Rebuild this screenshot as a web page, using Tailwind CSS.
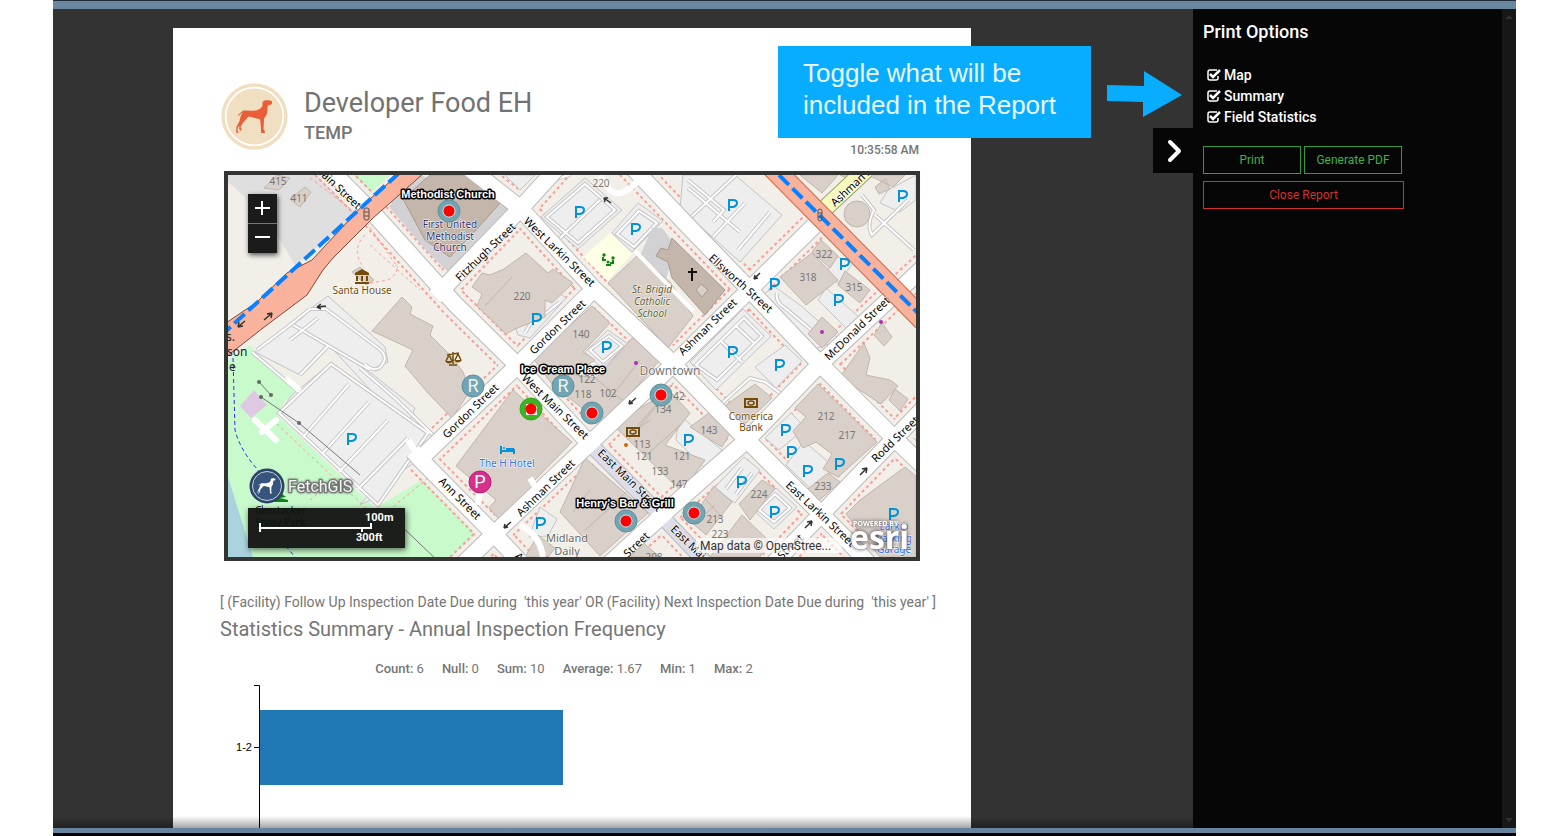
<!DOCTYPE html>
<html lang="en">
<head>
<meta charset="utf-8">
<meta name="viewport" content="width=device-width, initial-scale=1">
<title>Developer Food EH - Report</title>
<script src="https://cdn.jsdelivr.net/npm/@tailwindcss/browser@4"></script>
</head>
<body class="bg-white font-['Roboto',sans-serif]">
<div class="flex h-screen min-h-0 flex-col overflow-hidden pl-[53px] pr-7">
  <div class="h-[9px] shrink-0 border-t border-[#222d3b] bg-[#6a87a1]"></div>
  <div class="relative flex min-h-0 flex-1 bg-[#333]">
    <main class="relative min-w-0 flex-1 overflow-hidden pl-[120px] pr-[222px] pt-[19px]">
      <article class="bg-white px-[47px] pt-[55px] text-[#757575]">
        <header class="flex items-start">
          <svg class="ml-px size-[67px] shrink-0" viewBox="62 249 202 202" role="img" aria-label="Dog logo">
            <circle cx="163" cy="350" r="100" fill="#f0dfc1"/>
            <circle cx="163" cy="350" r="87" fill="none" stroke="#fff" stroke-width="5"/>
            <path fill="#e95d38" d="M187 308Q190 300 201 301Q209 300 216 305L215 313L203 317Q202 326 201 340Q198 349 192 355L190 388L195 396L193 400H183L182 380L180 358Q165 357 158 352L145 350L137 359L127 370L121 382L124 390L120 394L117 388L117 377L112 384L112 394L116 399H108L108 382L117 366L121 350L127 337L116 347L112 346L129 332L160 333Q180 330 187 318Z"/>
          </svg>
          <div class="ml-4 flex-1 pt-0.5">
            <h1 class="text-[27px] leading-9 text-[#727272]">Developer Food EH</h1>
            <p class="text-lg font-medium leading-6">TEMP</p>
          </div>
          <time class="mr-[5px] pt-[58px] text-xs font-medium leading-[18px]">10:35:58 AM</time>
        </header>
        <section class="relative mx-1 mt-3 border-4 border-[#333533]" aria-label="Map">
          <svg class="block w-full" viewBox="228 175 688 382" font-family="'Noto Sans',sans-serif">
            <defs>
              <g id="streets" fill="none">
                <path d="M325 165L373 213L455 304L517 365L588 442"/>
                <path d="M465 165L520 208L593 288L667 358L747 440L847 540L870 565"/>
                <path d="M630 165L690 228L747 287L820 364L893 437L925 468"/>
                <path d="M435 297L520 209L560 165"/>
                <path d="M420 459L517 366L593 290"/>
                <path d="M460 567L493 535L587 446L680 358L822 218"/>
                <path d="M925 266L820 364L747 440L680 499L608 565"/>
                <path d="M925 407L772 565"/>
                <path d="M413 451L420 459L495 535L525 567"/>
              </g>
              <path id="mall" fill="none" d="M588 442L650 504L710 567"/>
              <g id="aisles" fill="none">
                <path d="M331 364L428 433L378 505L279 413ZM349 384L303 437M369 402L322 454M388 420L339 472M408 438L358 489M252 352L285 380L299 392M310 309L290 325L257 350M293 325L370 370M310 309L326 309L378 348Q389 356 382 365T365 364M290 340L318 318M300 375L328 346M360 368L397 400L435 437"/>
                <path d="M585 184L615 210L578 243L547 217ZM560 238L600 200M639 211L657 223L634 247L617 234ZM688 180L724 210L713 222M736 175L688 220M745 203L713 237M770 212L738 250M688 188L740 232M530 200Q545 180 570 175"/>
                <path d="M540 318L560 302M525 333L532 321M609 336L622 346L603 362L590 350ZM744 318L762 336L717 380L696 365ZM735 325L755 344M720 340L742 362M742 468L726 489M752 473L736 494M775 494L790 508L774 522L759 510ZM777 293Q775 302 785 308L815 333M862 195L874 210Q866 225 872 235L908 200M875 215L914 250"/>
                <path d="M720 405L750 378L765 382L784 396"/>
              </g>
              <path id="parking" fill="none" stroke="#0092da" stroke-width="2" d="M-4 6V-5H0Q4 -5 4 -2T0 2H-4"/>
            </defs>
            <rect x="228" y="175" width="688" height="382" fill="#f2efe9"/>
            <path fill="#dfdfe0" d="M228 175H335L368 207L295 265L264 214L228 182Z"/>
            <path fill="#c8facc" d="M353 175H390L367 197ZM228 360L250 345L262 362L292 386L300 392L286 400L277 415L375 508L427 477L487 533L457 557H228Z"/>
            <path fill="#aad3df" d="M228 477L253 557H228Z"/>
            <g fill="none" stroke="#fa9c98" stroke-dasharray="3 3"><use href="#streets" stroke-width="30"/><use href="#mall" stroke-width="28"/></g>
            <g fill="none" stroke="#f2efe9"><use href="#streets" stroke-width="26"/><use href="#mall" stroke-width="24"/></g>
            <!-- car parks -->
            <g fill="#eee" stroke="#c4c4c8">
              <path d="M302 318L310 309L328 296L385 347L388 362L372 369L352 358L415 408L405 432L375 395L329 345L300 375L255 352Z"/>
              <path d="M331 363L414 438L360 505L376 497L405 469L415 462L279 413L292 395Z"/>
              <path d="M331 364L428 433L378 505L279 413Z"/>
              <path d="M585 178L622 210L578 249L541 217Z"/><path d="M638 203L663 221L632 252L612 233Z"/>
              <path d="M505 175H535L520 190ZM683 175H735L782 215L740 262L680 208Z"/>
              <path d="M760 296L775 287L800 305L840 340L812 350L790 330Z"/>
              <path d="M555 290L566 298L530 338L518 335L515 325Z"/>
              <path d="M608 330L628 344L602 368L585 352Z"/>
              <path d="M743 309L771 336L716 390L690 362Z"/><path d="M785 345L802 361L776 388L755 367Z"/>
              <path d="M888 190L916 175V200L900 212L880 203Z"/>
              <path d="M679 415L722 450L705 468L676 440Z"/><path d="M744 457L760 470L735 503L714 488Z"/>
              <path d="M776 488L797 507L774 529L753 510Z"/><path d="M791 413L806 428L779 450L765 438Z"/>
              <path d="M804 441L835 468L813 491L786 465Z"/><path d="M540 507L557 519L548 536L529 537Z"/>
              <path d="M835 256L853 263L838 283L825 276ZM826 288L860 318L846 328L818 300Z"/>
            </g>
            <use href="#aisles" stroke="#c6c6c9" stroke-width="4"/>
            <use href="#aisles" stroke="#fff" stroke-width="2"/>
            <path fill="none" stroke="#fff" stroke-width="6" stroke-linecap="round" d="M255 420L276 440M262 432L276 420M288 380L298 389"/>
            <path fill="#ffffe5" d="M610 233L632 254L608 281L583 257Z"/>
            <path fill="#dfc9e2" d="M240 406L254 390L267 405L251 418Z"/>
            <path fill="#d2d2d4" d="M389 207L398 192L420 175L518 206L500 225L448 272L425 249ZM652 228L662 228L675 245L665 284L640 256Z"/>
            <!-- buildings -->
            <g fill="#d9d0c9" stroke="#c2b5aa">
              <path d="M402 297L412 307L410 314L433 326L430 335L452 357L463 372L470 391L452 418L427 392L405 366L413 350L372 331Z"/>
              <path d="M472 287L482 273L490 275L504 269L526 253L548 273L553 269L573 283L552 303L545 300L545 317L515 329L506 334L477 306L482 294Z"/>
              <path d="M513 390L572 442L533 482L540 494L500 520L489 508L496 500L456 466Z"/>
              <path d="M533 358L592 306L610 323L583 352L595 360L554 387Z"/>
              <path d="M635 335L660 360L603 425L557 388L570 374L596 378Z"/>
              <path d="M638 255L670 282L693 316L668 348L608 283Z"/>
              <path d="M654 400L664 385L690 413L665 445L705 460L682 492L612 424Z"/>
              <path d="M585 458L648 513L600 556L560 512Z"/>
              <path d="M713 410L733 428L722 447L690 427Z"/><path d="M755 384L772 398L744 425L715 413Z"/>
              <path d="M818 384L877 442L838 477L823 469L832 454L816 442L803 448L793 431L806 417L795 408Z"/>
              <path d="M714 486L732 502L706 535L690 521ZM762 480L775 488L750 520L739 504ZM742 515L768 540L760 557H710Z"/>
              <path d="M828 473L840 482L816 503L804 492ZM905 467L916 476V557H880L846 514L860 500Z"/>
              <path d="M812 253L838 280L806 305L780 277ZM821 240L838 256L830 268L812 252ZM845 271L870 290L860 303L838 285Z"/>
              <path d="M822 317L838 332L822 348L808 334ZM840 377L864 343L870 358L866 375L890 380L898 386L881 404Z"/><circle cx="857" cy="214" r="13"/>
              <path d="M895 389L908 399L900 411L889 400ZM875 187L885 179L890 189L879 194ZM868 175H905L893 187ZM800 175H838L822 193ZM882 323L892 337L884 346L874 335ZM855 175H840L850 180Z"/>
              <path d="M264 188L277 175L290 178L279 190ZM290 199L305 187L311 192L300 207ZM352 272L360 267L374 280L366 285Z"/>
              <path d="M538 535L555 548L548 557H525ZM640 540L660 557H630Z"/>
            </g>
            <path fill="none" stroke="#c2b5aa" d="M485 306L512 277M609 400L640 360M595 378L622 400M638 425L665 395M628 440L655 408M650 452L680 425M605 512L628 490M585 530L610 508M573 512L590 490M700 519L715 505M706 500L720 515M640 427L650 420"/>
            <g fill="#c4b6ab" stroke="#a89a8f"><path d="M403 199L430 175H478L501 202L477 229L450 257L425 240Z"/><path d="M656 256L661 248L668 250L672 238L725 290L705 315L672 278L668 262Z"/><path fill="#d9d0c9" d="M701 284L708 290L702 297L696 290Z"/></g>
            <path fill="none" stroke="#fff" stroke-width="4" stroke-linecap="round" d="M636 252L692 310"/>
            <path fill="none" stroke="#fa9c98" stroke-dasharray="3 3" d="M365 235Q350 250 364 268M370 283L388 280Q400 272 396 265M310 178L365 220L398 268M277 424L370 512M428 478L382 516M370 245L420 290M310 500L335 480M785 175L910 300"/>
            <!-- road casings, then surfaces -->
            <use href="#streets" stroke="#bcbabd" stroke-width="18"/>
            <use href="#mall" stroke="#bcbabd" stroke-width="16"/>
            <use href="#mall" stroke="#dddde9" stroke-width="14"/>
            <use href="#streets" stroke="#fff" stroke-width="16"/>
            <path fill="none" stroke="#fff" stroke-width="6" d="M640 178Q622 200 610 190L600 175M530 478L540 495M418 455L408 440M480 490L478 505M520 525Q540 535 543 557"/>
            <path fill="none" stroke="#9aa36a" stroke-width="18" d="M820 213L866 170"/>
            <path fill="none" stroke="#f7fabf" stroke-width="16" d="M820 213L866 170"/>
            <path fill="#f9b29c" stroke="#7c4a3d" d="M400 173L363 205L312 260L287 273L257 302L226 323V357L263 328L307 295L323 270L333 258L373 218L424 173Z"/>
            <path fill="none" stroke="#c8684d" stroke-width="22" d="M770 165L925 322"/>
            <path fill="none" stroke="#f9b29c" stroke-width="20" d="M770 165L925 322"/>
            <path fill="none" stroke="#0a80ff" stroke-width="4" stroke-dasharray="14 5" d="M399 173L226 331M779 175L925 320"/>
            <path fill="none" stroke="#2a2aff" stroke-dasharray="4 3" d="M233 358L235 430Q240 450 258 470L264 520L300 563"/>
            <path fill="none" stroke="#777" d="M259 382L271 395M261 397L299 423M299 423L360 475M395 520L440 563"/>
            <g fill="#666"><circle cx="259" cy="382" r="2"/><circle cx="271" cy="395" r="2"/><circle cx="261" cy="397" r="2"/><circle cx="299" cy="423" r="2"/></g>
            <g fill="#b02bb8"><circle cx="636" cy="363" r="2"/><circle cx="822" cy="332" r="2"/><circle cx="881" cy="322" r="2"/></g><circle cx="626" cy="445" r="2" fill="#d36800"/>
            <g fill="none" stroke="#333">
              <path d="M264 320L272 313M272 313L267 314M272 313L271 318M245 321L238 327M238 327L239 322M238 327L243 326M326 306L317 307M317 307L321 304M317 307L321 309M760 273L754 279M754 279L755 275M754 279L758 278M611 203L604 198M604 198L608 198M604 198L605 202M636 398L629 404M629 404L630 400M629 404L633 403M511 522L504 528M504 528L505 524M504 528L508 527M860 475L867 468M867 468L862 469M867 468L866 473M805 528L812 521M812 521L807 522M812 521L811 526" stroke-width="1.5"/>
              <rect x="364" y="208" width="5" height="12" rx="2" stroke="#555"/><rect x="818" y="209" width="4" height="12" rx="2" stroke="#555"/><path d="M364 212H369M364 216H369M818 213H822M818 217H822" stroke="#555"/>
            </g>
            <g>
              <use href="#parking" x="580" y="212"/><use href="#parking" x="636" y="229"/><use href="#parking" x="733" y="205"/><use href="#parking" x="903" y="196"/><use href="#parking" x="845" y="264"/><use href="#parking" x="775" y="284"/><use href="#parking" x="839" y="300"/><use href="#parking" x="537" y="319"/><use href="#parking" x="607" y="347"/><use href="#parking" x="733" y="352"/><use href="#parking" x="780" y="365"/><use href="#parking" x="352" y="439"/><use href="#parking" x="689" y="440"/><use href="#parking" x="786" y="430"/><use href="#parking" x="792" y="452"/><use href="#parking" x="808" y="471"/><use href="#parking" x="840" y="464"/><use href="#parking" x="742" y="482"/><use href="#parking" x="775" y="512"/><use href="#parking" x="541" y="523"/><use href="#parking" x="894" y="514"/>
            </g>
            <!-- place icons -->
            <path fill="#734a08" d="M362 269L369 273V275H355V273ZM356 276H358V281H356ZM361 276H363V281H361ZM366 276H368V281H366ZM355 282H369V284H355Z"/>
            <path fill="none" stroke="#734a08" stroke-width="1.5" d="M453 352V364M449 365H457M447 355L459 353M446 361L449 355L452 361M455 360L458 354L461 360"/><path fill="#734a08" d="M445 361H453Q449 366 445 361ZM454 360H462Q458 365 454 360Z"/>
            <g fill="none" stroke="#734a08" stroke-width="2"><rect x="627" y="428" width="12" height="8"/><rect x="745" y="399" width="12" height="8"/></g><g fill="none" stroke="#734a08" stroke-width="1.5"><ellipse cx="633" cy="432" rx="3" ry="2"/><ellipse cx="751" cy="403" rx="3" ry="2"/></g>
            <path stroke="#111" stroke-width="2" d="M692 268V281M688 272H697"/>
            <g fill="#0d8517"><circle cx="604" cy="255" r="1.7"/><circle cx="613" cy="258" r="1.7"/><circle cx="608" cy="262" r="1.5"/></g><path fill="none" stroke="#0d8517" stroke-width="2" d="M603 257V260H606M613 260V263H610M606 265H611"/>
            <path fill="none" stroke="#0092da" stroke-width="2" d="M501 446V454M501 451H514V454M514 449V451M506 449H514"/><circle cx="504" cy="448" r="1" fill="#0092da"/>
            <!-- street names -->
            <g font-size="11" fill="#000" stroke="#fff" stroke-width="1" paint-order="stroke" stroke-linejoin="round">
              <text transform="translate(357 210) rotate(43)" text-anchor="end">Main Street</text>
              <text transform="translate(460 282) rotate(-44)">Fitzhugh Street</text>
              <text transform="translate(523 222) rotate(44)">West Larkin Street</text>
              <text transform="translate(534 355) rotate(-44)">Gordon Street</text>
              <text transform="translate(708 259) rotate(42)">Ellsworth Street</text>
              <text transform="translate(683 356) rotate(-44)">Ashman Street</text>
              <text transform="translate(835 207) rotate(-43)">Ashman Street</text>
              <text transform="translate(829 361) rotate(-44)">McDonald Street</text>
              <text transform="translate(447 439) rotate(-44)">Gordon Street</text>
              <text transform="translate(438 482) rotate(45)">Ann Street</text>
              <text transform="translate(521 379) rotate(44)">West Main Street</text>
              <text transform="translate(521 517) rotate(-44)">Ashman Street</text>
              <text transform="translate(597 454) rotate(44)">East Main Street</text>
              <text transform="translate(670 530) rotate(44)">East Main Street</text>
              <text transform="translate(628 558) rotate(-44)">Street</text>
              <text transform="translate(785 486) rotate(43)">East Larkin Street</text>
              <text transform="translate(876 463) rotate(-44)">Rodd Street</text>
              <text transform="translate(782 560) rotate(-44)">Street</text>
              <text transform="translate(514 557) rotate(45)">Ann Street</text>
            </g>
            <g font-size="12" fill="#222"><text x="226" y="341">s.</text><text x="227" y="356">son</text><text x="229" y="371">e</text></g>
            <g font-size="10" text-anchor="middle" fill="#777">
              <text x="278" y="185">415</text><text x="299" y="202">411</text><text x="601" y="187">220</text><text x="522" y="300">220</text><text x="581" y="338">140</text><text x="824" y="258">322</text><text x="808" y="281">318</text><text x="854" y="291">315</text><text x="587" y="383">122</text><text x="583" y="398">118</text><text x="608" y="397">102</text><text x="679" y="400">42</text><text x="663" y="413">134</text><text x="642" y="448">113</text><text x="644" y="460">121</text><text x="682" y="460">121</text><text x="660" y="475">133</text><text x="679" y="488">147</text><text x="709" y="434">143</text><text x="826" y="420">212</text><text x="847" y="439">217</text><text x="823" y="490">233</text><text x="759" y="498">224</text><text x="715" y="523">213</text><text x="720" y="538">223</text><text x="654" y="561">208</text>
            </g>
            <g font-size="11" text-anchor="middle" fill="#777" stroke="#fff" stroke-width="1" paint-order="stroke">
              <text x="670" y="375" font-size="12">Downtown</text>
              <g fill="#666"><text x="567" y="542">Midland</text><text x="567" y="555">Daily</text></g>
              <g fill="#734a08" font-size="10"><text x="362" y="294">Santa House</text><text x="751" y="420">Comerica</text><text x="751" y="431">Bank</text></g>
              <g fill="#2f2d66" font-size="10"><text x="450" y="228">First United</text><text x="450" y="240">Methodist</text><text x="450" y="251">Church</text></g>
              <g fill="#5b5a2b" font-size="10" font-style="italic"><text x="652" y="293">St. Brigid</text><text x="652" y="305">Catholic</text><text x="652" y="317">School</text></g>
              <g fill="#2f74f0" font-size="10"><text x="507" y="467">The H Hotel</text><text x="894" y="530">Larkin</text><text x="894" y="542">Parking</text><text x="894" y="553">Garage</text></g>
            </g>
            <!-- facility markers -->
            <g fill="#72a5b1" stroke="#5e909c"><circle cx="449" cy="211" r="11"/><circle cx="473" cy="386" r="11"/><circle cx="563" cy="386" r="11"/><circle cx="592" cy="413" r="11"/><circle cx="661" cy="395" r="11"/><circle cx="626" cy="521" r="11"/><circle cx="694" cy="513" r="11"/><circle cx="531" cy="409" r="11" fill="#3cb320" stroke="#35a51a"/><circle cx="480" cy="482" r="11" fill="#d5308c" stroke="#ba1c72"/></g>
            <path fill="#fff" d="M526 404H534L537 407V415H526Z"/>
            <g fill="none" stroke="#e3f0f2"><circle cx="449" cy="211" r="6"/><circle cx="592" cy="413" r="6"/><circle cx="661" cy="395" r="6"/><circle cx="626" cy="521" r="6"/><circle cx="694" cy="513" r="6"/></g>
            <g fill="#fe0000"><circle cx="449" cy="211" r="5.5"/><circle cx="592" cy="413" r="5.5"/><circle cx="661" cy="395" r="5.5"/><circle cx="626" cy="521" r="5.5"/><circle cx="694" cy="513" r="5.5"/><circle cx="531" cy="409" r="5.5"/></g>
            <g font-family="Roboto,sans-serif" font-size="18" fill="#eaf3f5" text-anchor="middle"><text x="473" y="392">R</text><text x="563" y="392">R</text><text x="480" y="488" fill="#fff">P</text></g>
            <g font-family="'Liberation Sans',sans-serif" font-size="11" font-weight="700" fill="#fff" stroke="#000" stroke-width="3" stroke-linejoin="round" paint-order="stroke" text-anchor="middle"><text x="448" y="198">Methodist Church</text><text x="563" y="373">Ice Cream Place</text><text x="625" y="507">Henry's Bar &amp; Grill</text></g>
            <!-- brand badge and scale -->
            <path fill="#0d8517" d="M276 491L282 494L286 497L280 498L288 500V502H274V499Z"/>
            <circle cx="267" cy="486" r="16" fill="#35557c" stroke="#2b4467" stroke-width="3"/><circle cx="267" cy="486" r="14.5" fill="none" stroke="#c7d3df"/>
            <path fill="#fff" transform="translate(240 432) scale(.164 .154)" d="M187 308Q190 300 201 301Q209 300 216 305L215 313L203 317Q202 326 201 340Q198 349 192 355L190 388L195 396L193 400H183L182 380L180 358Q165 357 158 352L145 350L137 359L127 370L121 382L124 390L120 394L117 388L117 377L112 384L112 394L116 399H108L108 382L117 366L121 350L127 337L116 347L112 346L129 332L160 333Q180 330 187 318Z"/>
            <text class="drop-shadow-[0_0_1px_#444]" x="288" y="492" font-family="Roboto,sans-serif" font-size="16" fill="#f4f4f4" stroke="#777" stroke-width="2" paint-order="stroke">FetchGIS</text>
            <rect class="drop-shadow-[1px_2px_3px_#0009]" x="248" y="508" width="157" height="40" fill="#1b1e1b"/>
            <g font-size="10" fill="#0b150d"><text x="255" y="514">Gerstacker</text><text x="255" y="526">Spray Park</text></g>
            <path fill="none" stroke="#fff" stroke-width="2" d="M260 523V532M260 528H372M371 523V528M362 528V532"/>
            <g font-family="Roboto,sans-serif" font-size="11" font-weight="700" fill="#fff"><text x="365" y="521">100m</text><text x="356" y="541">300ft</text></g>
            <rect x="696" y="538" width="146" height="15" fill="#fff" fill-opacity=".65"/>
            <text x="700" y="550" font-family="Roboto,sans-serif" font-size="12" fill="#333">Map data © OpenStree...</text>
            <g class="drop-shadow-[0_0_2px_#333]" fill="#fff" font-family="'Open Sans',sans-serif" font-weight="700"><text x="853" y="526" font-size="7">POWERED BY</text><text x="850" y="549" font-size="32">esri</text></g>
          </svg>
          <div class="absolute left-5 top-[19px] flex flex-col gap-px bg-[#777] shadow-[1px_2px_5px_#000a]">
            <button class="grid h-[29px] w-[29px] place-items-center bg-[#1b1b1b]" aria-label="Zoom in"><svg class="size-[15px]" viewBox="0 0 15 15" stroke="#fff" stroke-width="2"><path d="M0 7H15M7 0V14"/></svg></button>
            <button class="grid h-[29px] w-[29px] place-items-center bg-[#1b1b1b]" aria-label="Zoom out"><svg class="size-[15px]" viewBox="0 0 15 15" stroke="#fff" stroke-width="2"><path d="M0 6H15"/></svg></button>
          </div>
        </section>
        <p class="mt-8 whitespace-pre text-sm leading-[18px]">[ (Facility) Follow Up Inspection Date Due during  'this year' OR (Facility) Next Inspection Date Due during  'this year' ]</p>
        <h2 class="mt-1.5 text-xl leading-6">Statistics Summary - Annual Inspection Frequency</h2>
        <div class="mt-[18px] flex justify-center gap-[18px] pr-4 text-[13px] leading-5">
          <span><b class="font-medium">Count:</b> 6</span><span><b class="font-medium">Null:</b> 0</span><span><b class="font-medium">Sum:</b> 10</span><span><b class="font-medium">Average:</b> 1.67</span><span><b class="font-medium">Min:</b> 1</span><span><b class="font-medium">Max:</b> 2</span>
        </div>
        <svg class="mt-[5px] block h-[152px] w-full" role="img" aria-label="Bar chart of inspection frequency">
          <rect x="40" y="26" width="303" height="75" fill="#1f77b4"/>
          <path d="M34 1.5H39.5V152M34 63.5H39" fill="none" stroke="#000"/>
          <text x="32" y="67" text-anchor="end" font-family="'Liberation Sans',sans-serif" font-size="11" fill="#000">1-2</text>
        </svg>
      </article>
      <div class="absolute inset-x-0 bottom-0 h-3 bg-linear-to-b from-transparent to-black/35"></div>
    </main>
    <aside class="relative flex w-[323px] shrink-0 bg-[#060606] text-white">
      <button class="absolute -left-10 top-[119px] grid h-[45px] w-10 place-items-center bg-[#060606] pl-1" aria-label="Collapse print options">
        <svg class="h-6 w-4" viewBox="0 0 16 24" fill="none" stroke="#fff" stroke-width="4" stroke-linecap="round" stroke-linejoin="round"><path d="M3 3L12 12L3 21"/></svg>
      </button>
      <form class="min-w-0 flex-1 pl-[10px] pt-[11px]">
        <h2 class="text-lg font-medium leading-6">Print Options</h2>
        <div class="mt-[21px] flex flex-col gap-px pl-1 text-sm font-medium leading-5">
          <label class="flex items-center gap-0.5"><span class="grid"><input type="checkbox" checked class="col-start-1 row-start-1 h-3 w-[15px] appearance-none"><svg class="pointer-events-none col-start-1 row-start-1 h-3 w-[15px]" viewBox="0 0 15 12" fill="none" stroke="#fff" stroke-width="1.5"><path d="M11 7V9Q11 11 9 11H3Q1 11 1 9V3Q1 1 3 1H10"/><path stroke-width="2.5" d="M3 5L6 8L13 1"/></svg></span>Map</label>
          <label class="flex items-center gap-0.5"><span class="grid"><input type="checkbox" checked class="col-start-1 row-start-1 h-3 w-[15px] appearance-none"><svg class="pointer-events-none col-start-1 row-start-1 h-3 w-[15px]" viewBox="0 0 15 12" fill="none" stroke="#fff" stroke-width="1.5"><path d="M11 7V9Q11 11 9 11H3Q1 11 1 9V3Q1 1 3 1H10"/><path stroke-width="2.5" d="M3 5L6 8L13 1"/></svg></span>Summary</label>
          <label class="flex items-center gap-0.5"><span class="grid"><input type="checkbox" checked class="col-start-1 row-start-1 h-3 w-[15px] appearance-none"><svg class="pointer-events-none col-start-1 row-start-1 h-3 w-[15px]" viewBox="0 0 15 12" fill="none" stroke="#fff" stroke-width="1.5"><path d="M11 7V9Q11 11 9 11H3Q1 11 1 9V3Q1 1 3 1H10"/><path stroke-width="2.5" d="M3 5L6 8L13 1"/></svg></span>Field Statistics</label>
        </div>
        <div class="mt-[19px] flex gap-[3px] text-xs text-[#3fae49]">
          <button type="button" class="h-7 w-[98px] border border-[#339b3c]">Print</button>
          <button type="button" class="h-7 w-[98px] border border-[#339b3c]">Generate PDF</button>
        </div>
        <button type="button" class="mt-[7px] h-7 w-[201px] border border-[#d2322d] text-xs text-[#d2322d]">Close Report</button>
      </form>
      <div class="flex w-3.5 flex-col items-center justify-between bg-[#171717] py-1.5" aria-hidden="true">
        <span class="border-x-4 border-b-4 border-x-transparent border-b-[#303030]"></span>
        <span class="border-x-4 border-t-4 border-x-transparent border-t-[#303030]"></span>
      </div>
    </aside>
    <div class="absolute right-[425px] top-[37px] w-[313px] bg-[#08adff] px-[25px] pb-[17px] pt-[11px] font-['Liberation_Sans',sans-serif] text-[26px] leading-8 text-[#e9f7ff]">Toggle what will be<br>included in the Report</div>
    <svg class="absolute right-[334px] top-[62px] h-[46px] w-[75px]" viewBox="0 0 75 46" fill="#08adff" aria-hidden="true"><path d="M0 14L37 15V0L75 24L36 46V31L0 30Z"/></svg>
  </div>
  <div class="h-2 shrink-0 border-b-3 border-black bg-[#66849e]"></div>
</div>
</body>
</html>
